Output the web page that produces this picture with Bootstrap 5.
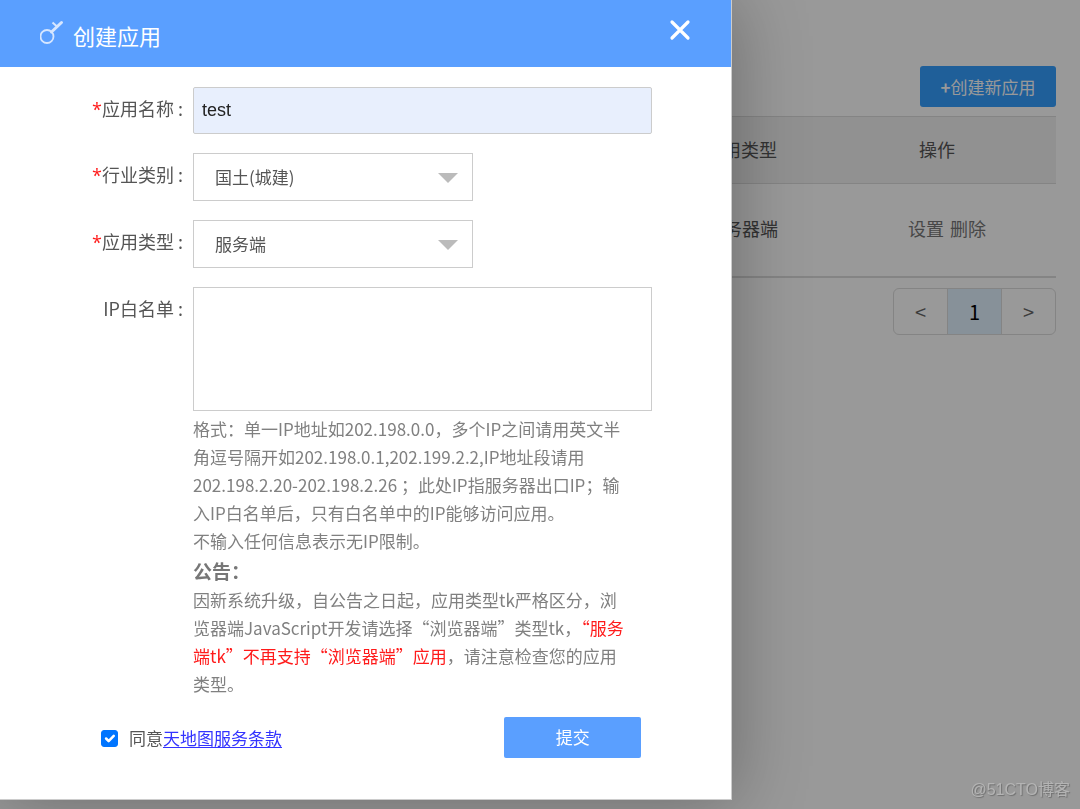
<!DOCTYPE html>
<html lang="zh-CN">
<head>
<meta charset="utf-8">
<meta name="viewport" content="width=device-width, initial-scale=1">
<title>创建应用</title>
<link href="https://cdn.jsdelivr.net/npm/bootstrap@5.3.0/dist/css/bootstrap.min.css" rel="stylesheet">
<style>
  body { font-family: "Noto Sans CJK SC", sans-serif; font-size: 17px; color: #555; min-height: 100vh; overflow: hidden; }
  .console { padding: 66px 24px 0; isolation: isolate; }
  .btn-new { width: 136px; height: 41px; padding: 0; font-size: 17px; background: #349eff; color: #fff; border-radius: 3px; }
  .app-table { table-layout: fixed; font-size: 18px; color: #555; margin: 9px 0 12px; }
  .app-table th, .app-table td { padding: 0 0 2px; border: 0; font-weight: 400; vertical-align: middle; color: #555; }
  .app-table thead th { height: 67px; background: #f2f2f2; border-top: 1px solid #dcdcdc; border-bottom: 1px solid #dcdcdc; }
  .app-table tbody td { height: 93px; border-bottom: 2px solid #dcdcdc; }
  .app-table a { color: #777; text-decoration: none; margin-right: 6px; }
  .col-kind { width: 203px; }
  .col-ops { width: 148px; }
  .app-table .head-ops { padding-left: 11px; }
  .app-table .cell-kind { padding-left: 1px; }
  .pager { margin-top: -2px; }
  .pager .page-link { width: 55px; height: 47px; padding: 0; line-height: 45px; text-align: center; font-size: 20px; color: #666; border-color: #dcdcdc; }
  .pager .active .page-link { background: #e2f2ff; color: #000; }
  .shade { position: fixed; inset: 0; background: rgba(0,0,0,.4); }
  .dialog { position: absolute; top: 0; left: 0; width: 67.8%; background: #fff; border: solid #ccc; border-width: 0 1px 1px 0; box-shadow: 1px 1px 70px rgba(0,0,0,.3); }
  .dialog-head { height: 67px; padding: 0 40px; background: #5a9fff; color: #fff; }
  .dialog-head h1 { font-size: 22px; line-height: 32px; padding-top: 2px; }
  .dialog-body { padding: 20px 79px 41px 0; }
  .form-line { display: flex; margin-bottom: 19px; }
  .form-line > label { flex: none; width: 193px; padding-right: 10px; text-align: right; font-size: 18px; line-height: 42px; }
  .form-line i { color: #ff1a1a; font-style: normal; font-family: "Open Sans", sans-serif; line-height: 1; }
  .form-line > div { flex: 1; min-width: 0; position: relative; }
  .dialog .form-control, .dialog .form-select { border-color: #ccc; border-radius: 0; color: #555; }
  .dialog .name-box { height: 47px; padding: 0 8px; border-radius: 2px; background: #e8effd; color: #222; font: 18px "Liberation Sans", sans-serif; }
  .dialog .form-select { width: 61%; height: 48px; padding: 0 50px 0 21px; font-size: 17px; background-image: none; }
  .arrow { position: absolute; left: 61%; top: 20px; margin-left: -35px; border: solid transparent; border-width: 10px 10px 0; border-top-color: #bbb; pointer-events: none; }
  .dialog .ip-box { height: 124px; resize: none; }
  .notes { font-size: 17px; line-height: 28px; color: #808080; padding-top: 4px; white-space: nowrap; }
  .notes p { margin: 0; }
  .notes h2 { font-size: 19px; line-height: 31px; font-weight: 700; color: #777; margin: 0; }
  .notes em { color: #ff1a1a; font-style: normal; }
  .agree { padding-left: 101px; padding-right: 11px; }
  .agree .form-check-input { width: 17px; height: 17px; margin: 1px 11px 0 0; border-radius: 3px; border-color: #0075ff; background-color: #0075ff; background-size: 17px; }
  .agree a { color: #33f; text-underline-offset: 2px; }
  .btn-send { width: 137px; height: 41px; padding: 0 0 2px; font-size: 17px; color: #fff; background: #5a9fff; border-radius: 2px; }
  .watermark { position: absolute; right: 10px; bottom: 7px; font: 16px/24px "Liberation Sans", "Noto Sans CJK SC", sans-serif; color: #b4b4b4; text-shadow: 1px 1px 1px #707070; }
</style>
</head>
<body>
<main class="console">
  <div class="d-flex justify-content-end"><button type="button" class="btn btn-new"><b>+</b>创建新应用</button></div>
  <table class="table app-table">
    <colgroup><col><col class="col-kind"><col class="col-ops"></colgroup>
    <thead><tr><th></th><th>应用类型</th><th class="head-ops">操作</th></tr></thead>
    <tbody><tr><td></td><td class="cell-kind">服务器端</td><td><a href="#">设置</a><a href="#">删除</a></td></tr></tbody>
  </table>
  <nav aria-label="分页"><ul class="pagination pager justify-content-end mb-0">
    <li class="page-item"><a class="page-link" href="#">&lt;</a></li>
    <li class="page-item active"><a class="page-link" href="#">1</a></li>
    <li class="page-item"><a class="page-link" href="#">&gt;</a></li>
  </ul></nav>
</main>
<div class="shade"></div>
<div class="watermark">@51CTO博客</div>

<section class="dialog" role="dialog" aria-labelledby="dlg-title">
  <header class="dialog-head d-flex align-items-center justify-content-between">
    <div class="d-flex align-items-center">
      <svg class="me-2 mb-1" width="25" height="26" viewBox="0 0 25 26" fill="none" stroke="#d6e6ff" aria-hidden="true"><circle cx="7" cy="17.5" r="6.5" stroke-width="1.8"/><path d="M11.5 13 21.5 3.5" stroke-width="3" stroke-linecap="round"/><path d="M12.5 3.5 17 7.5" stroke-width="2"/></svg>
      <h1 id="dlg-title" class="fw-normal mb-0">创建应用</h1>
    </div>
    <button type="button" class="btn p-0 border-0 lh-1 mb-2" aria-label="关闭"><svg width="22" height="22" viewBox="0 0 22 22" fill="none" stroke="#fff" stroke-width="3.2" stroke-linecap="round"><path d="M3 3 19 19M19 3 3 19"/></svg></button>
  </header>
  <form class="dialog-body">
    <div class="form-line"><label for="app-name"><i>*</i>应用名称 :</label><div><input id="app-name" class="form-control name-box" type="text" value="test"></div></div>
    <div class="form-line"><label for="trade"><i>*</i>行业类别 :</label><div><select id="trade" class="form-select"><option>国土(城建)</option></select><span class="arrow"></span></div></div>
    <div class="form-line"><label for="kind"><i>*</i>应用类型 :</label><div><select id="kind" class="form-select"><option>服务端</option></select><span class="arrow"></span></div></div>
    <div class="form-line"><label for="ips">IP白名单 :</label><div>
      <textarea id="ips" class="form-control ip-box"></textarea>
      <div class="notes">
        <p>格式：单一IP地址如202.198.0.0，多个IP之间请用英文半<br>角逗号隔开如202.198.0.1,202.199.2.2,IP地址段请用<br>202.198.2.20-202.198.2.26 ；此处IP指服务器出口IP；输<br>入IP白名单后，只有白名单中的IP能够访问应用。<br>不输入任何信息表示无IP限制。</p>
        <h2>公告：</h2>
        <p>因新系统升级，自公告之日起，应用类型tk严格区分，浏<br>览器端JavaScript开发请选择“浏览器端”类型tk，<em>“服务<br>端tk”不再支持“浏览器端”应用</em>，请注意检查您的应用<br>类型。</p>
      </div>
    </div></div>
    <div class="agree d-flex align-items-center">
      <input id="agree" class="form-check-input" type="checkbox" checked>
      <label for="agree">同意</label><a href="#">天地图服务条款</a>
      <button type="submit" class="btn btn-send ms-auto">提交</button>
    </div>
  </form>
</section>
<script src="https://cdn.jsdelivr.net/npm/bootstrap@5.3.0/dist/js/bootstrap.bundle.min.js"></script>
</body>
</html>
